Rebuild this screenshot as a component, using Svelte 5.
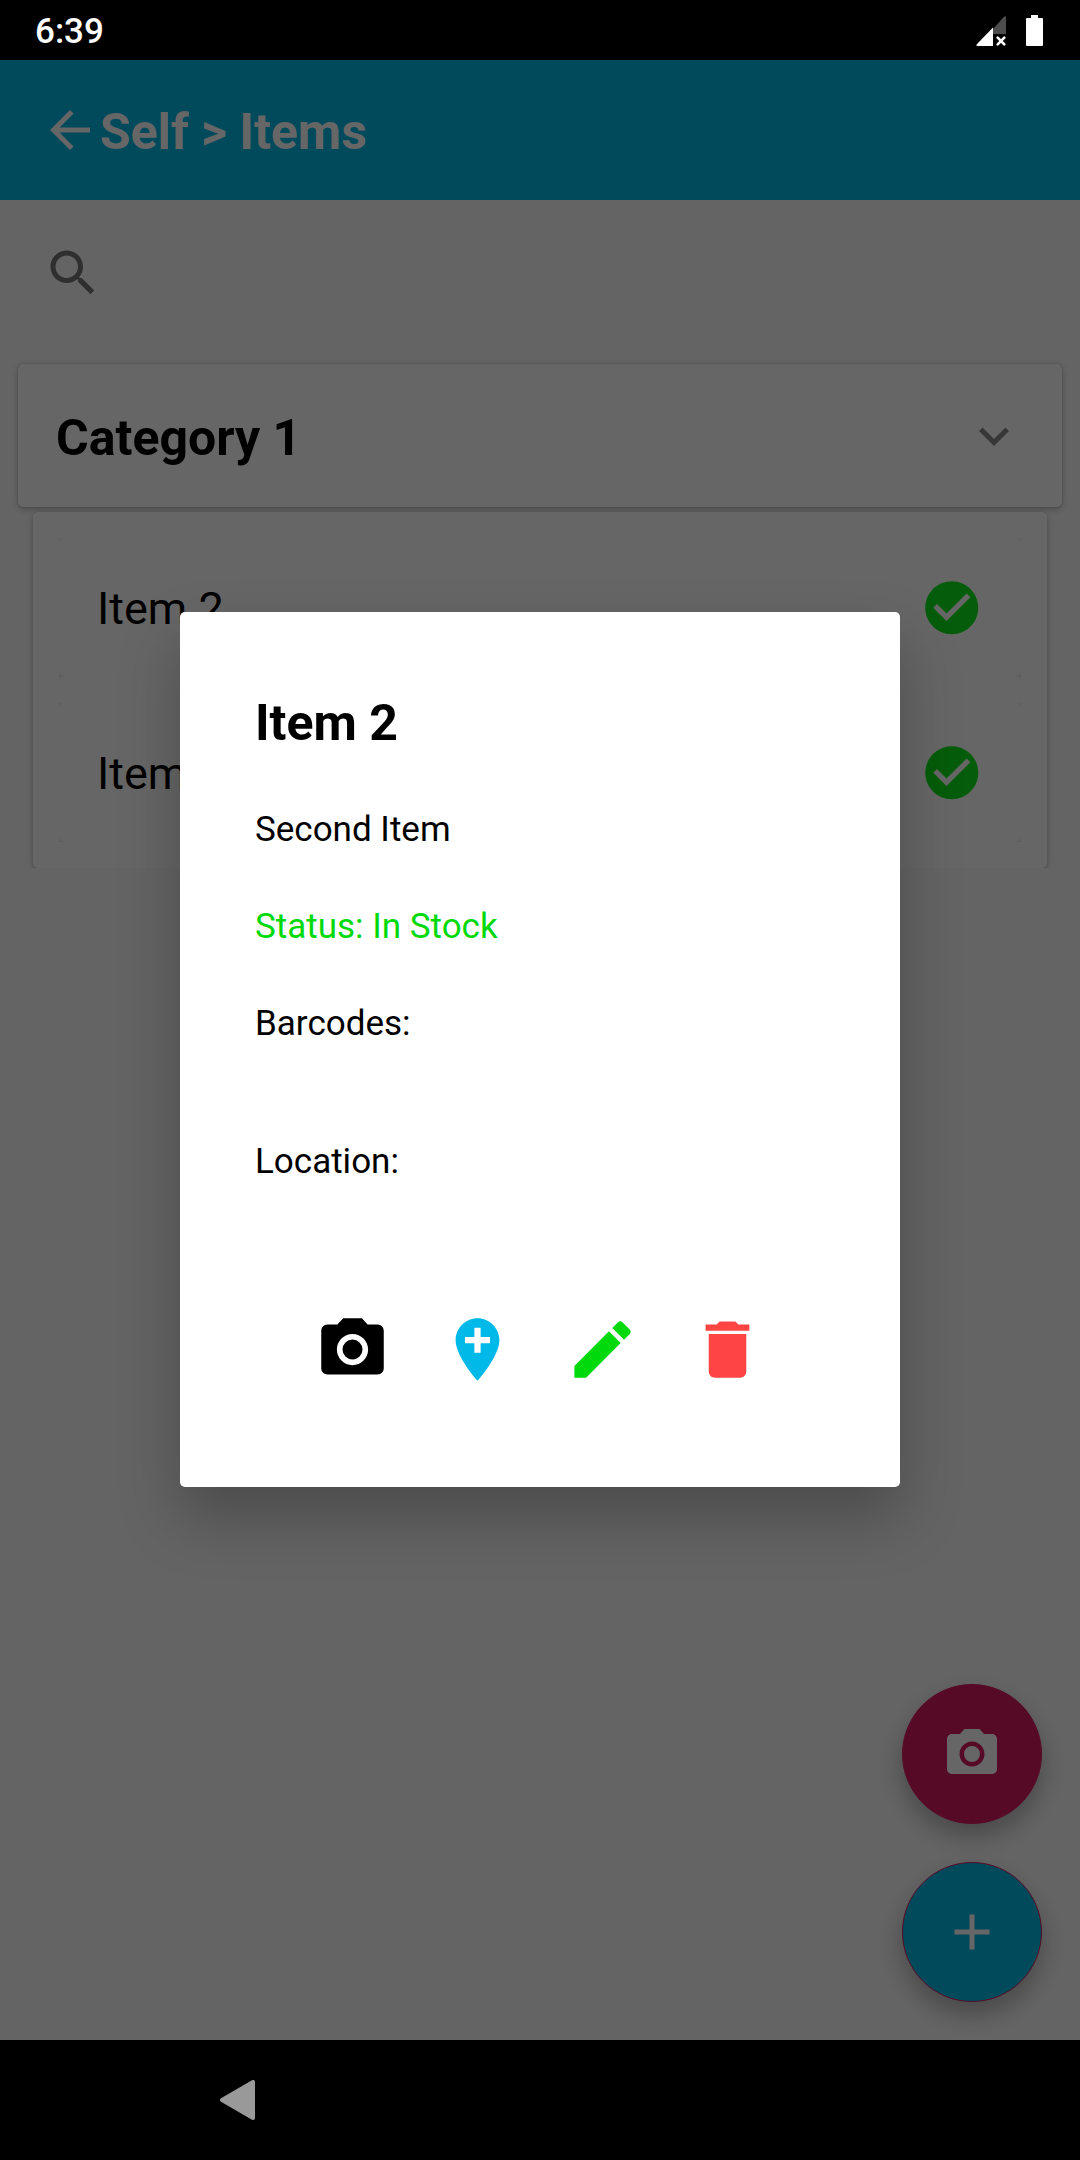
<script>
  const items = ['Item 2', 'Item 1'];

  const paths = {
    back: 'M20 11H7.83l5.59-5.59L12 4l-8 8 8 8 1.41-1.41L7.83 13H20v-2z',
    search:
      'M15.5 14h-.79l-.28-.27C15.41 12.59 16 11.11 16 9.5 16 5.91 13.09 3 9.5 3S3 5.91 3 9.5 5.91 16 9.5 16c1.61 0 3.09-.59 4.23-1.57l.27.28v.79l5 4.99L20.49 19l-4.99-5zm-6 0C7.01 14 5 11.99 5 9.5S7.01 5 9.5 5 14 7.01 14 9.5 11.99 14 9.5 14z',
    chevron: 'M7.41 8.59L12 13.17l4.59-4.58L18 10l-6 6-6-6 1.41-1.41z',
    check:
      'M12 2C6.48 2 2 6.48 2 12s4.48 10 10 10 10-4.48 10-10S17.52 2 12 2zm-2 15l-5-5 1.41-1.41L10 14.17l7.59-7.59L19 8l-9 9z',
    camera:
      'M9 2L7.17 4H4c-1.1 0-2 .9-2 2v12c0 1.1.9 2 2 2h16c1.1 0 2-.9 2-2V6c0-1.1-.9-2-2-2h-3.17L15 2H9zm3 15c-2.76 0-5-2.24-5-5s2.24-5 5-5 5 2.24 5 5-2.24 5-5 5zM12 8.8a3.2 3.2 0 1 0 0 6.4 3.2 3.2 0 1 0 0-6.4z',
    place:
      'M12 2C8.14 2 5 5.14 5 9c0 5.25 7 13 7 13s7-7.75 7-13c0-3.86-3.14-7-7-7zm4 8h-3v3h-2v-3H8V8h3V5h2v3h3v2z',
    edit: 'M3 17.25V21h3.75L17.81 9.94l-3.75-3.75L3 17.25zM20.71 7.04c.39-.39.39-1.02 0-1.41l-2.34-2.34c-.39-.39-1.02-.39-1.41 0l-1.83 1.83 3.75 3.75 1.83-1.83z',
    trash: 'M6 19c0 1.1.9 2 2 2h8c1.1 0 2-.9 2-2V7H6v12zM19 4h-3.5l-1-1h-5l-1 1H5v2h14V4z',
    add: 'M19 13h-6v6h-2v-6H5v-2h6V5h2v6h6v2z'
  };

  const actions = ['camera', 'place', 'edit', 'trash'];
</script>

{#snippet icon(name, cls)}
  <svg class="icon {cls}" viewBox="0 0 24 24"><path d={paths[name]} fill-rule="evenodd" /></svg>
{/snippet}

<div class="screen">
  <div class="status">
    <span class="clock">6:39</span>
    <div class="tray">
      <svg class="signal" viewBox="0 0 30 30">
        <path d="M17 13L28 .8Q30-.6 30 1.500V18H17z" fill="#4d4d4d" />
        <path d="M17 11.500V30H1.500Q-.4 30 .8 28.200z" fill="#fff" />
        <path d="M21.700 21.700l6.600 6.600M28.300 21.700l-6.600 6.600" stroke="#fff" stroke-width="2.600" stroke-linecap="round" />
      </svg>
      <svg class="battery" viewBox="0 0 17 31">
        <path d="M5 0h7v3h4q1 0 1 1v26q0 1-1 1H1q-1 0-1-1V4q0-1 1-1h4z" fill="#fff" />
      </svg>
    </div>
  </div>

  <div class="app">
    <header>
      {@render icon('back', 'back')}
      <h1>Self &gt; Items</h1>
    </header>
    <div class="search">{@render icon('search', '')}</div>
    <div class="category">
      <h2>Category 1</h2>
      {@render icon('chevron', '')}
    </div>
    <div class="list">
      {#each items as item}
        <div class="clip">
          <div class="row">
            <span>{item}</span>
            {@render icon('check', 'check')}
          </div>
        </div>
      {/each}
    </div>
    <div class="fabs">
      <div class="fab pink">{@render icon('camera', '')}</div>
      <div class="fab blue">{@render icon('add', '')}</div>
    </div>

    <div class="scrim">
      <div class="modal">
        <h3>Item 2</h3>
        <p>Second Item</p>
        <p class="stock">Status: In Stock</p>
        <p>Barcodes:</p>
        <p class="location">Location:</p>
        <div class="actions">
          {#each actions as name}{@render icon(name, name)}{/each}
        </div>
      </div>
    </div>
  </div>

  <nav>
    <svg class="nav-back" viewBox="0 0 35 40">
      <path d="M2 20L33 2V38z" fill="#999" stroke="#999" stroke-width="4" stroke-linejoin="round" />
    </svg>
  </nav>
</div>

<style>
  :global(body) {
    margin: 0;
    background: #000;
  }
  .screen {
    width: 1080px;
    height: 2160px;
    display: flex;
    flex-direction: column;
    overflow: hidden;
    font-family: Roboto, sans-serif;
    color: #000;
  }
  h1, h2, h3, p {
    margin: 0;
  }
  h1, h2, h3 {
    font-size: 50px;
    line-height: 60px;
    font-weight: 700;
  }
  .icon {
    display: block;
    flex: none;
    width: 60px;
    height: 60px;
    fill: currentColor;
  }
  .status {
    height: 60px;
    box-sizing: border-box;
    padding: 0 37px 0 35px;
    display: flex;
    align-items: center;
    justify-content: space-between;
    background: #000;
    color: #fff;
  }
  .clock {
    font-size: 35px;
    line-height: 40px;
    font-weight: 500;
    padding-top: 3px;
  }
  .tray {
    display: flex;
    align-items: flex-end;
    gap: 20px;
  }
  .signal {
    width: 30px;
    height: 30px;
  }
  .battery {
    width: 17px;
    height: 31px;
  }
  .app {
    position: relative;
    height: 1980px;
    background: #fafafa;
    display: flex;
    flex-direction: column;
  }
  header {
    height: 140px;
    flex: none;
    box-sizing: border-box;
    padding-left: 40px;
    display: flex;
    align-items: center;
    background: #00bae6;
    color: #fff;
  }
  header h1 {
    padding-top: 4px;
  }
  .search {
    height: 164px;
    flex: none;
    box-sizing: border-box;
    padding: 42.5px 0 0 42.5px;
    color: #757575;
  }
  .category {
    height: 143px;
    flex: none;
    box-sizing: border-box;
    margin: 0 18px;
    padding: 0 38px;
    display: flex;
    align-items: center;
    justify-content: space-between;
    background: #fff;
    border-radius: 5px;
    box-shadow: 0 2px 6px rgba(0, 0, 0, 0.25), 0 0 2px rgba(0, 0, 0, 0.2);
    color: #8a8a8a;
  }
  .category h2 {
    padding-top: 5px;
    color: #000;
  }
  .list {
    height: 356px;
    flex: none;
    box-sizing: border-box;
    margin: 5px 33px 0;
    padding: 26px;
    display: flex;
    flex-direction: column;
    gap: 26px;
    background: #fff;
    border-radius: 5px;
    box-shadow: 0 2px 6px rgba(0, 0, 0, 0.25), 0 0 2px rgba(0, 0, 0, 0.1);
    clip-path: inset(-5px -20px 0);
  }
  .clip {
    overflow: hidden;
  }
  .row {
    height: 139px;
    box-sizing: border-box;
    padding: 0 37.5px 0 38px;
    display: flex;
    align-items: center;
    justify-content: space-between;
    font-size: 45px;
    line-height: 54px;
    border-radius: 5px;
    background: #fff;
    box-shadow: 0 1px 5px rgba(0, 0, 0, 0.3);
  }
  .row span {
    padding-top: 2px;
  }
  .check {
    width: 63.6px;
    height: 63.6px;
    color: #0de61a;
  }
  .fabs {
    margin-top: auto;
    padding: 0 38px 38px 0;
    display: flex;
    flex-direction: column;
    align-items: flex-end;
    gap: 38px;
  }
  .fab {
    width: 140px;
    height: 140px;
    box-sizing: border-box;
    border: 1px solid #d81b60;
    border-radius: 50%;
    display: flex;
    align-items: center;
    justify-content: center;
    color: #fff;
    box-shadow: 0 12px 24px rgba(0, 0, 0, 0.28);
  }
  .pink {
    background: #d81b60;
  }
  .blue {
    background: #00bae6;
  }
  .scrim {
    position: absolute;
    inset: 0;
    box-sizing: border-box;
    padding-top: 552px;
    background: rgba(0, 0, 0, 0.6);
    display: flex;
    flex-direction: column;
    align-items: center;
  }
  .modal {
    width: 720px;
    height: 875px;
    box-sizing: border-box;
    padding: 81px 75px 0;
    background: #fff;
    border-radius: 5px;
    box-shadow: 0 30px 60px rgba(0, 0, 0, 0.25);
  }
  .modal p {
    margin-top: 56px;
    font-size: 35px;
    line-height: 41px;
  }
  .modal .stock {
    color: #00d90b;
  }
  .modal .location {
    margin-top: 97px;
  }
  .actions {
    margin-top: 130px;
    padding-left: 60px;
    display: flex;
    gap: 50px;
  }
  .actions .icon {
    width: 75px;
    height: 75px;
  }
  .place {
    color: #00b9e8;
  }
  .edit {
    color: #00d90b;
  }
  .trash {
    color: #ff4444;
  }
  nav {
    height: 120px;
    background: #000;
    display: flex;
    align-items: center;
    padding-left: 220px;
  }
  .nav-back {
    width: 35px;
    height: 40px;
  }
</style>
